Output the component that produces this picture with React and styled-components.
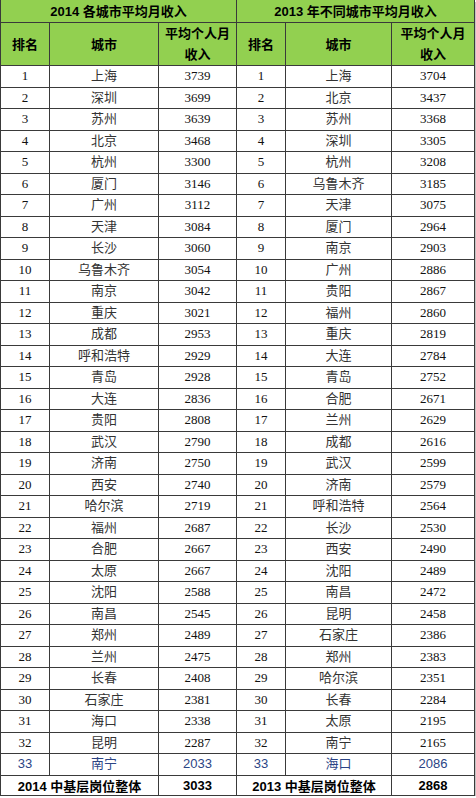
import styled, { createGlobalStyle } from "styled-components";

const left = [
  ["上海", 3739], ["深圳", 3699], ["苏州", 3639], ["北京", 3468], ["杭州", 3300],
  ["厦门", 3146], ["广州", 3112], ["天津", 3084], ["长沙", 3060], ["乌鲁木齐", 3054],
  ["南京", 3042], ["重庆", 3021], ["成都", 2953], ["呼和浩特", 2929], ["青岛", 2928],
  ["大连", 2836], ["贵阳", 2808], ["武汉", 2790], ["济南", 2750], ["西安", 2740],
  ["哈尔滨", 2719], ["福州", 2687], ["合肥", 2667], ["太原", 2667], ["沈阳", 2588],
  ["南昌", 2545], ["郑州", 2489], ["兰州", 2475], ["长春", 2408], ["石家庄", 2381],
  ["海口", 2338], ["昆明", 2287], ["南宁", 2033],
];

const right = [
  ["上海", 3704], ["北京", 3437], ["苏州", 3368], ["深圳", 3305], ["杭州", 3208],
  ["乌鲁木齐", 3185], ["天津", 3075], ["厦门", 2964], ["南京", 2903], ["广州", 2886],
  ["贵阳", 2867], ["福州", 2860], ["重庆", 2819], ["大连", 2784], ["青岛", 2752],
  ["合肥", 2671], ["兰州", 2629], ["成都", 2616], ["武汉", 2599], ["济南", 2579],
  ["呼和浩特", 2564], ["长沙", 2530], ["西安", 2490], ["沈阳", 2489], ["南昌", 2472],
  ["昆明", 2458], ["石家庄", 2386], ["郑州", 2383], ["哈尔滨", 2351], ["长春", 2284],
  ["太原", 2195], ["南宁", 2165], ["海口", 2086],
];

const GlobalStyle = createGlobalStyle`
  body {
    margin: 0;
    background: #ffffff;
  }
`;

const Frame = styled.div`
  width: 474px;
  box-shadow: 1px 1px 0 #ffffff, 2px 2px 0 #c4c4c4;
`;

const Table = styled.table`
  width: 474px;
  border-collapse: collapse;
  table-layout: fixed;
  color: #111;
`;

const HeadCell = styled.th`
  background: #92d050;
  border: 1px solid #3a3a3a;
  border-top: ${(p) => (p.top ? "none" : "1px solid #3a3a3a")};
  height: ${(p) => (p.top ? "22px" : "42px")};
  padding: 0;
  font-family: "Liberation Sans", "Noto Sans CJK SC", sans-serif;
  font-weight: 700;
  font-size: 13px;
  line-height: 21px;
  text-align: center;
  color: #000;
`;

const Cell = styled.td`
  border: 1px solid #3a3a3a;
  height: 20.5px;
  padding: 0;
  text-align: center;
  font-size: 13px;
  line-height: 20px;
  font-weight: 400;
  font-family: ${(p) =>
    p.plain
      ? '"Liberation Sans", "Noto Sans CJK SC", sans-serif'
      : '"Liberation Serif", "Noto Sans CJK SC", serif'};
  color: ${(p) => (p.plain ? "#2b4485" : p.city ? "#333" : "#111")};
`;

const FootCell = styled.td`
  border: 1px solid #3a3a3a;
  height: 19px;
  padding: 0;
  text-align: center;
  font-family: "Liberation Sans", "Noto Sans CJK SC", sans-serif;
  font-weight: 700;
  font-size: 13px;
  color: #000;
`;

export default function App() {
  return (
    <>
      <GlobalStyle />
      <Frame>
        <Table>
          <colgroup>
            <col style={{ width: 49 }} />
            <col style={{ width: 109 }} />
            <col style={{ width: 78 }} />
            <col style={{ width: 49 }} />
            <col style={{ width: 106 }} />
            <col style={{ width: 83 }} />
          </colgroup>
          <thead>
            <tr>
              <HeadCell top colSpan={3}>2014 各城市平均月收入</HeadCell>
              <HeadCell top colSpan={3}>2013 年不同城市平均月收入</HeadCell>
            </tr>
            <tr>
              <HeadCell>排名</HeadCell>
              <HeadCell>城市</HeadCell>
              <HeadCell>平均个人月<br />收入</HeadCell>
              <HeadCell>排名</HeadCell>
              <HeadCell>城市</HeadCell>
              <HeadCell>平均个人月<br />收入</HeadCell>
            </tr>
          </thead>
          <tbody>
            {left.map(([city, val], i) => {
              const last = i === left.length - 1;
              const [rCity, rVal] = right[i];
              return (
                <tr key={i}>
                  <Cell plain={last}>{i + 1}</Cell>
                  <Cell city plain={last}>{city}</Cell>
                  <Cell plain={last}>{val}</Cell>
                  <Cell plain={last}>{i + 1}</Cell>
                  <Cell city plain={last}>{rCity}</Cell>
                  <Cell plain={last}>{rVal}</Cell>
                </tr>
              );
            })}
            <tr>
              <FootCell colSpan={2}>2014 中基层岗位整体</FootCell>
              <FootCell>3033</FootCell>
              <FootCell colSpan={2}>2013 中基层岗位整体</FootCell>
              <FootCell>2868</FootCell>
            </tr>
          </tbody>
        </Table>
      </Frame>
    </>
  );
}
